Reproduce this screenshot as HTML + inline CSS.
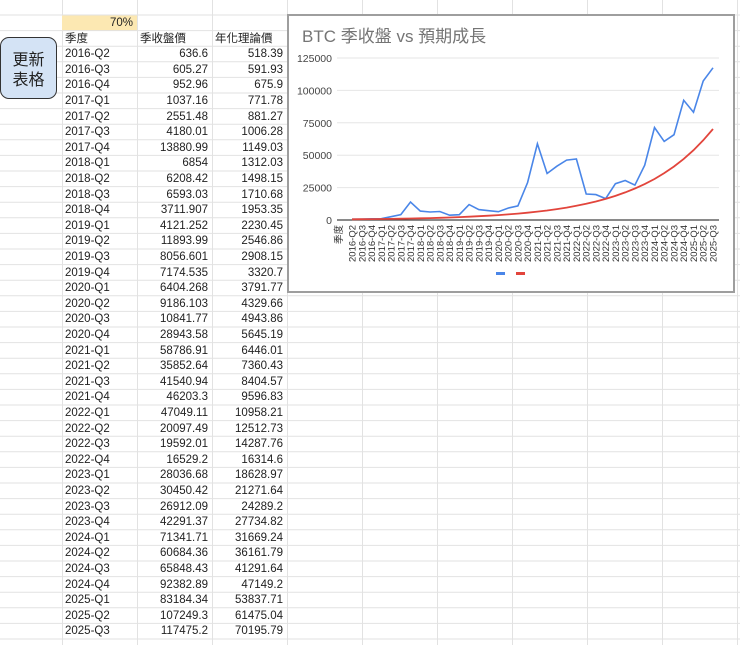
<!DOCTYPE html>
<html><head><meta charset="utf-8"><style>
body{margin:0;width:740px;height:645px;overflow:hidden;background:#fff;font-family:"Liberation Sans","Noto Sans CJK TC",sans-serif;font-size:11.5px;color:#222;position:relative}
.c{position:absolute;height:15.6px;line-height:16px;white-space:nowrap}
.r{text-align:right}
</style></head><body>
<svg id="g" width="740" height="645" style="position:absolute;left:0;top:0"></svg>
<div id="cells"></div>
<div style="position:absolute;left:0;top:37px;width:57px;height:62px;border:1.5px solid #333;border-radius:9px;background:#d4e3f5;box-sizing:border-box;text-align:center;font-size:16px;line-height:20px;padding-top:10px;font-family:'Noto Sans CJK TC',sans-serif">更新<br>表格</div>
<div style="position:absolute;left:287px;top:14px;width:448px;height:279px;border:2px solid #9e9e9e;box-sizing:border-box;background:#fff"></div>
<svg id="ch" width="740" height="645" style="position:absolute;left:0;top:0"></svg>
<script>
var d=[["2016-Q2",636.6,518.39],["2016-Q3",605.27,591.93],["2016-Q4",952.96,675.9],["2017-Q1",1037.16,771.78],["2017-Q2",2551.48,881.27],["2017-Q3",4180.01,1006.28],["2017-Q4",13880.99,1149.03],["2018-Q1",6854,1312.03],["2018-Q2",6208.42,1498.15],["2018-Q3",6593.03,1710.68],["2018-Q4",3711.907,1953.35],["2019-Q1",4121.252,2230.45],["2019-Q2",11893.99,2546.86],["2019-Q3",8056.601,2908.15],["2019-Q4",7174.535,3320.7],["2020-Q1",6404.268,3791.77],["2020-Q2",9186.103,4329.66],["2020-Q3",10841.77,4943.86],["2020-Q4",28943.58,5645.19],["2021-Q1",58786.91,6446.01],["2021-Q2",35852.64,7360.43],["2021-Q3",41540.94,8404.57],["2021-Q4",46203.3,9596.83],["2022-Q1",47049.11,10958.21],["2022-Q2",20097.49,12512.73],["2022-Q3",19592.01,14287.76],["2022-Q4",16529.2,16314.6],["2023-Q1",28036.68,18628.97],["2023-Q2",30450.42,21271.64],["2023-Q3",26912.09,24289.2],["2023-Q4",42291.37,27734.82],["2024-Q1",71341.71,31669.24],["2024-Q2",60684.36,36161.79],["2024-Q3",65848.43,41291.64],["2024-Q4",92382.89,47149.2],["2025-Q1",83184.34,53837.71],["2025-Q2",107249.3,61475.04],["2025-Q3",117475.2,70195.79]];
var RH=15.6,T=15,s='',h='';
var cols=[62,137,212,287,362,437,512,587,662,737];
cols.forEach(function(x){s+='<line x1="'+(x+.5)+'" y1="0" x2="'+(x+.5)+'" y2="645" stroke="#e2e2e2"/>';});
s+='<rect x="62" y="'+T+'" width="75" height="'+RH+'" fill="#fce8b2"/>';
for(var i=0;i<42;i++){var y=T+i*RH;s+='<line x1="0" y1="'+y+'" x2="740" y2="'+y+'" stroke="#e2e2e2"/>';}
document.getElementById('g').innerHTML=s;
function cell(x,y,w,t,r){h+='<div class="c'+(r?' r':'')+'" style="left:'+(x+3)+'px;top:'+y+'px;width:'+(w-7)+'px">'+t+'</div>';}
cell(62,T,75,'70%',1);
cell(62,T+RH,75,'季度');cell(137,T+RH,75,'季收盤價');cell(212,T+RH,75,'年化理論價');
d.forEach(function(r,i){var y=T+(i+2)*RH;cell(62,y,75,r[0]);cell(137,y,75,r[1],1);cell(212,y,75,r[2],1);});
document.getElementById('cells').innerHTML=h;
var c='<text x="302" y="42" font-size="17" fill="#757575">BTC 季收盤 vs 預期成長</text>';
var x0=352,dx=(713-352)/37,y0=220,k=162/125000;
for(var j=0;j<=5;j++){var gy=y0-j*25000*k;c+='<line x1="337" y1="'+gy+'" x2="719" y2="'+gy+'" stroke="'+(j?'#e6e6e6':'#444')+'" stroke-width="'+(j?1:1.2)+'"/><text x="332" y="'+(gy+4)+'" font-size="10.5" fill="#444" text-anchor="end">'+(j*25000)+'</text>';}
var p1='',p2='';
d.forEach(function(r,i){var x=x0+i*dx;p1+=x.toFixed(1)+','+(y0-r[1]*k).toFixed(1)+' ';p2+=x.toFixed(1)+','+(y0-r[2]*k).toFixed(1)+' ';
c+='<text transform="translate('+(x+3.5)+',225) rotate(-90)" font-size="9.5" fill="#333" text-anchor="end">'+r[0]+'</text>';});
c+='<text transform="translate(342,225) rotate(-90)" font-size="9.5" fill="#333" text-anchor="end">季度</text>';
c+='<polyline points="'+p1+'" fill="none" stroke="#4a86e8" stroke-width="1.6"/><polyline points="'+p2+'" fill="none" stroke="#e2453c" stroke-width="1.8"/>';
c+='<rect x="496" y="272" width="9" height="3" fill="#4a86e8"/><rect x="516" y="272" width="9" height="3" fill="#e2453c"/>';
document.getElementById('ch').innerHTML=c;
</script>
</body></html>
